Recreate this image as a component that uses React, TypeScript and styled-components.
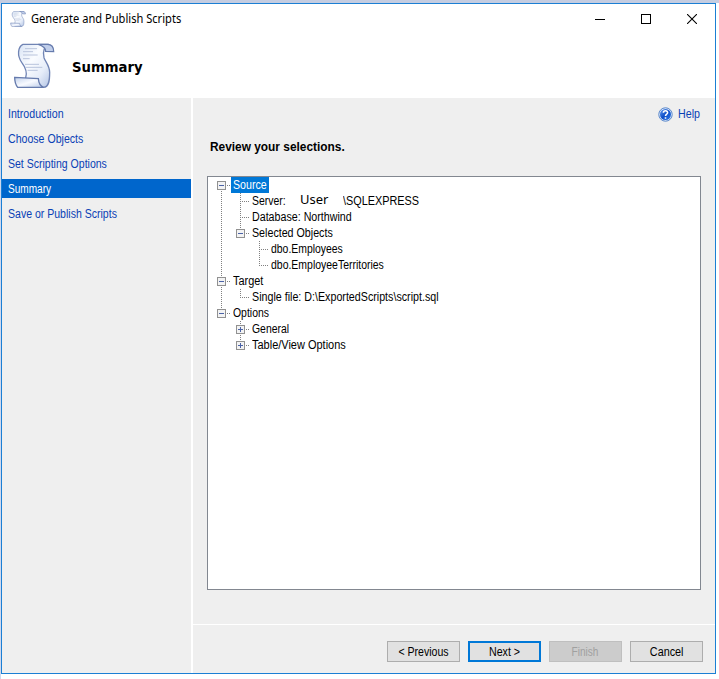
import React from 'react';
import styled, { createGlobalStyle, css } from 'styled-components';

const GlobalStyle = createGlobalStyle`
  * { box-sizing: border-box; }
  body {
    margin: 0;
    background: #fff;
    font: 12px/16px "Liberation Sans", Arial, sans-serif;
    color: #000;
  }
`;

const Desktop = styled.div`
  width: 719px;
  height: 679px;
  padding: 3px 3px 5px 1px;
  background: linear-gradient(#c5cde1, #c5cde1) 0 0 / 100% 3px no-repeat,
    linear-gradient(#cfd8ee, #cfd8ee) 0 0 / 1px 100% no-repeat, #fff;
`;

const Window = styled.div`
  display: flex;
  flex-direction: column;
  width: 715px;
  height: 671px;
  border: 1px solid #1b7fd4;
  background: #fff;
`;

/* Condensed label; the origin keeps the text anchored where its container puts it. */
const Label = styled.span<{ $fit: number; $origin?: string }>`
  display: inline-block;
  white-space: pre;
  transform: scaleX(${(p) => p.$fit});
  transform-origin: ${(p) => p.$origin ?? 'left'} center;
`;

const TitleBar = styled.header`
  display: flex;
  align-items: center;
  height: 30px;
  padding-left: 8px;
`;

const WindowTitle = styled(Label)`
  flex: 1;
  margin-left: 5px;
  font: 12px/18px "Noto Sans", sans-serif;
`;

const CaptionButtons = styled.div`
  display: flex;
`;

const CaptionButton = styled.button`
  display: flex;
  align-items: center;
  justify-content: center;
  width: 46px;
  height: 30px;
  padding: 0 0 1px;
  border: 0;
  background: none;

  &:first-child {
    padding: 0;
    width: 45px;
  }
`;

const Banner = styled.div`
  display: flex;
  align-items: center;
  height: 64px;
  padding: 0 0 0 11px;
`;

const BannerTitle = styled.h1`
  margin: 1px 0 0 17px;
  font: bold 14px/20px "DejaVu Sans", sans-serif;
`;

const Body = styled.div`
  display: flex;
  gap: 2px;
  flex: 1;
`;

const Sidebar = styled.nav`
  display: flex;
  flex-direction: column;
  gap: 6px;
  width: 189px;
  padding-top: 6px;
  background: #efefef;
`;

const Step = styled.a<{ $active?: boolean }>`
  height: 19px;
  padding: 2px 0 0 6px;
  color: ${(p) => (p.$active ? '#fff' : '#0a41b5')};
  ${(p) => p.$active && css`background: #0066cc;`}
`;

const Main = styled.main`
  display: flex;
  flex-direction: column;
  flex: 1;
  background: #efefef;
`;

const HelpLink = styled.a`
  display: flex;
  align-items: center;
  gap: 5px;
  height: 18px;
  margin: 7px 0 0 465px;
  color: #0a41b5;
`;

const Prompt = styled.h2`
  margin: 16px 0 0 17px;
  font: bold 12px/16px "Liberation Sans", Arial, sans-serif;
`;

const TreeBox = styled.div`
  width: 494px;
  height: 414px;
  margin: 21px 0 0 14px;
  padding-left: 4px;
  border: 1px solid #828790;
  background: #fff;
`;

const TreeRow = styled.div`
  display: flex;
  height: 16px;
`;

const Guide = styled.svg`
  display: block;
  flex: none;
  width: 19px;
  height: 16px;
`;

const NodeText = styled.span<{ $selected?: boolean }>`
  display: flex;
  padding-left: 2px;
  ${(p) =>
    p.$selected &&
    css`
      width: 38px;
      background: #0078d7;
      color: #fff;
    `}
`;

const Piece = styled.span<{ $width: number }>`
  width: ${(p) => p.$width}px;
`;

const UserName = styled.span`
  width: 43px;
  font: 13px/13px "Noto Sans", sans-serif;
`;

const Footer = styled.footer`
  display: flex;
  gap: 8px;
  height: 49px;
  margin-top: auto;
  padding: 16px 12px 0 0;
  justify-content: flex-end;
  border-top: 1px solid #fff;
`;

const Button = styled.button<{ $kind?: 'default' | 'disabled' }>`
  display: flex;
  align-items: center;
  justify-content: center;
  width: 73px;
  height: 21px;
  padding: 1px 0 0;
  border: 1px solid #adadad;
  background: #e1e1e1;
  color: #000;
  font: inherit;
  ${(p) => p.$kind === 'default' && css`border: 2px solid #0078d7;`}
  ${(p) =>
    p.$kind === 'disabled' &&
    css`
      border-color: #bfbfbf;
      background: #cccccc;
      color: #a0a0a0;
    `}
`;

const ScrollIcon = ({ width, height, id }: { width: number; height: number; id: string }) => (
  <svg width={width} height={height} viewBox="24 24 126 138" preserveAspectRatio="none">
    <defs>
      <linearGradient id={id} x1="0" y1="0" x2="1" y2="1">
        <stop offset="0" stopColor="#d9e4f5" />
        <stop offset="0.4" stopColor="#fafcff" />
        <stop offset="0.7" stopColor="#e6edf9" />
        <stop offset="1" stopColor="#b3c4e4" />
      </linearGradient>
      <linearGradient id={`${id}-roll`} x1="0" y1="0" x2="1" y2="1">
        <stop offset="0" stopColor="#c3d2ec" />
        <stop offset="0.5" stopColor="#f8faff" />
        <stop offset="1" stopColor="#b9c9e6" />
      </linearGradient>
    </defs>
    <path
      d="M54 28H132C118 34 112 50 117 68C121 80 134 92 134 112C134 136 132 157 116 157H62V128C68 112 62 98 50 82C36 62 38 36 54 28Z"
      fill={`url(#${id})`}
      stroke="#7084b4"
      strokeWidth="4"
    />
    <path d="M100 28H128C140 28 146 36 146 50L122 49C122 40 116 33 100 28Z" fill="#c0ceea" stroke="#667bad" strokeWidth="4" />
    <path d="M29 127L100 131C101 143 106 154 116 157H38C32 150 29 139 29 127Z" fill={`url(#${id}-roll)`} stroke="#667bad" strokeWidth="4" />
    <path d="M60 41H96M54 50H84M54 60H98M54 71H74M60 88H102M60 97H112M68 106H98" stroke="#b9c4dc" strokeWidth="3" />
  </svg>
);

const HelpIcon = () => (
  <svg width="15" height="15" viewBox="0 0 15 15">
    <defs>
      <linearGradient id="help-fill" x1="0" y1="0" x2="1" y2="1">
        <stop offset="0" stopColor="#5f9af0" />
        <stop offset="0.5" stopColor="#0f4fc8" />
        <stop offset="1" stopColor="#2c78e8" />
      </linearGradient>
    </defs>
    <circle cx="7.500" cy="7.500" r="6.700" fill="#e6effc" stroke="#4478c5" strokeWidth="0.9" />
    <circle cx="7.500" cy="7.500" r="5.500" fill="url(#help-fill)" />
    <path d="M5.400 5.800C5.400 3.100 9.800 3.200 9.600 5.700C9.500 7.200 7.500 7.100 7.500 9M7.500 10.200V11.800" fill="none" stroke="#fff" strokeWidth="1.6" />
  </svg>
);

type Cell = 'blank' | 'line' | 'tee' | 'elbow' | 'plus' | 'plusEnd' | 'minusTop' | 'minus' | 'minusEnd';

/* One 19px indent step: dotted connectors plus an optional expander. */
const TreeCell = ({ kind }: { kind: Cell }) => {
  const boxed = kind.startsWith('plus') || kind.startsWith('minus');
  const up = kind !== 'blank' && kind !== 'minusTop';
  const down = ['line', 'tee', 'plus', 'minus', 'minusTop'].includes(kind);
  const across = kind !== 'blank' && kind !== 'line';
  return (
    <Guide viewBox="0 0 19 16" shapeRendering="crispEdges">
      <g stroke="#808080" strokeDasharray="1 1">
        {up && <path d="M9.500 0V8" />}
        {down && <path d="M9.500 8V16" />}
        {across && <path d="M9 8.500H18" />}
      </g>
      {boxed && (
        <>
          <rect x="5.500" y="4.500" width="8" height="8" fill="#f3f3f3" stroke="#919191" />
          <path d="M7 8.500H12" stroke="#4b63a7" />
          {kind.startsWith('plus') && <path d="M9.500 6V11" stroke="#4b63a7" />}
        </>
      )}
    </Guide>
  );
};

const steps = [
  { text: 'Introduction', fit: 0.886 },
  { text: 'Choose Objects', fit: 0.882 },
  { text: 'Set Scripting Options', fit: 0.877 },
  { text: 'Summary', fit: 0.84, active: true },
  { text: 'Save or Publish Scripts', fit: 0.878 },
];

const nodes: { cells: Cell[]; text: string; fit: number; selected?: boolean; server?: boolean }[] = [
  { cells: ['minusTop'], text: 'Source', fit: 0.885, selected: true },
  { cells: ['line', 'tee'], text: 'Server:', fit: 0.87, server: true },
  { cells: ['line', 'tee'], text: 'Database: Northwind', fit: 0.89 },
  { cells: ['line', 'minusEnd'], text: 'Selected Objects', fit: 0.89 },
  { cells: ['line', 'blank', 'tee'], text: 'dbo.Employees', fit: 0.868 },
  { cells: ['line', 'blank', 'elbow'], text: 'dbo.EmployeeTerritories', fit: 0.872 },
  { cells: ['minus'], text: 'Target', fit: 0.91 },
  { cells: ['line', 'elbow'], text: 'Single file: D:\\ExportedScripts\\script.sql', fit: 0.891 },
  { cells: ['minusEnd'], text: 'Options', fit: 0.87 },
  { cells: ['blank', 'plus'], text: 'General', fit: 0.868 },
  { cells: ['blank', 'plusEnd'], text: 'Table/View Options', fit: 0.915 },
];

const buttons: { text: string; fit: number; kind?: 'default' | 'disabled' }[] = [
  { text: '< Previous', fit: 0.88 },
  { text: 'Next >', fit: 0.89, kind: 'default' },
  { text: 'Finish', fit: 0.84, kind: 'disabled' },
  { text: 'Cancel', fit: 0.9 },
];

export default function App() {
  return (
    <Desktop>
      <GlobalStyle />
      <Window>
        <TitleBar>
          <ScrollIcon width={16} height={16} id="scroll-small" />
          <WindowTitle $fit={0.925}>Generate and Publish Scripts</WindowTitle>
          <CaptionButtons>
            <CaptionButton aria-label="Minimize">
              <svg width="11" height="11" shapeRendering="crispEdges"><path d="M0 5.500H10" stroke="#000" /></svg>
            </CaptionButton>
            <CaptionButton aria-label="Maximize">
              <svg width="10" height="10" shapeRendering="crispEdges"><rect x=".5" y=".5" width="9" height="9" fill="none" stroke="#000" /></svg>
            </CaptionButton>
            <CaptionButton aria-label="Close">
              <svg width="10" height="10"><path d="M0 0L10 10M10 0L0 10" stroke="#000" strokeWidth="1.1" /></svg>
            </CaptionButton>
          </CaptionButtons>
        </TitleBar>
        <Banner>
          <ScrollIcon width={42} height={46} id="scroll-large" />
          <BannerTitle>
            <Label $fit={0.945}>Summary</Label>
          </BannerTitle>
        </Banner>
        <Body>
          <Sidebar>
            {steps.map((s) => (
              <Step key={s.text} $active={s.active}>
                <Label $fit={s.fit}>{s.text}</Label>
              </Step>
            ))}
          </Sidebar>
          <Main>
            <HelpLink>
              <HelpIcon />
              <Label $fit={0.89}>Help</Label>
            </HelpLink>
            <Prompt>
              <Label $fit={0.99}>Review your selections.</Label>
            </Prompt>
            <TreeBox>
              {nodes.map((n) => (
                <TreeRow key={n.text}>
                  {n.cells.map((c, i) => (
                    <TreeCell key={i} kind={c} />
                  ))}
                  <NodeText $selected={n.selected}>
                    {n.server ? (
                      <>
                        <Piece $width={48}><Label $fit={n.fit}>{n.text}</Label></Piece>
                        <UserName>User</UserName>
                        <Label $fit={0.905}>{'\\SQLEXPRESS'}</Label>
                      </>
                    ) : (
                      <Label $fit={n.fit}>{n.text}</Label>
                    )}
                  </NodeText>
                </TreeRow>
              ))}
            </TreeBox>
            <Footer>
              {buttons.map((b) => (
                <Button key={b.text} $kind={b.kind} disabled={b.kind === 'disabled'}>
                  <Label $fit={b.fit} $origin="center">{b.text}</Label>
                </Button>
              ))}
            </Footer>
          </Main>
        </Body>
      </Window>
    </Desktop>
  );
}
